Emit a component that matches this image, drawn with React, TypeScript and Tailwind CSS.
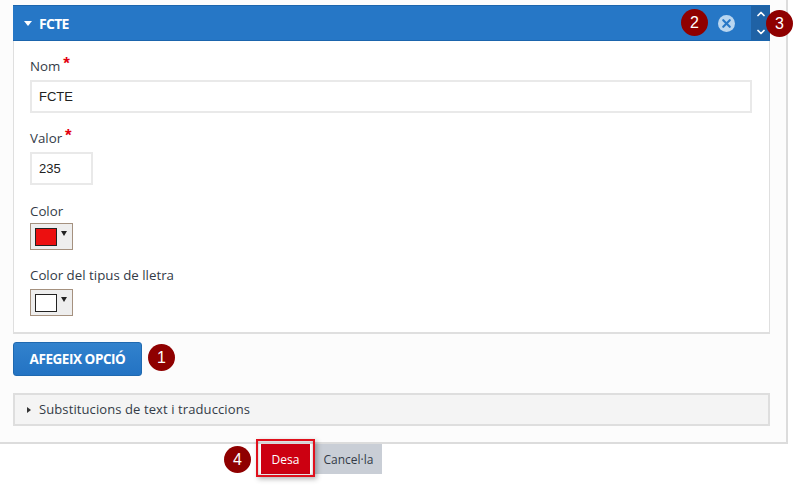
import { ChevronUp, ChevronDown, X } from "lucide-react";

const openSans = "font-['Open_Sans',sans-serif]";

function Badge({ n, className }: { n: number; className: string }) {
  return (
    <span
      className={`absolute flex h-[27px] w-[27px] items-center justify-center rounded-full bg-[#8f0000] font-['Liberation_Sans',sans-serif] text-[16px] text-white ${className}`}
    >
      {n}
    </span>
  );
}

function Required({ label }: { label: string }) {
  return (
    <label className="flex h-[20px] items-center text-[13.3px] text-[#333b47]">
      <span className="mt-[2px]">{label}</span>
      <span className="ml-[3px] -mt-[6px] font-['Liberation_Sans',sans-serif] text-[17px] font-bold leading-none text-[#e3000f]">*</span>
    </label>
  );
}

function ColorPicker({ color }: { color: string }) {
  return (
    <div className="flex h-[27px] w-[43px] items-start border border-[#a5917f] bg-[#eeeeee] pl-[4px] pt-[4px]">
      <div className={`h-[18px] w-[22px] border border-[#222222] ${color}`} />
      <span className="ml-[4px] mt-[3px] h-0 w-0 border-x-[3px] border-t-[5px] border-x-transparent border-t-[#222222]" />
    </div>
  );
}

export default function App() {
  return (
    <div className={`relative h-[489px] w-[800px] overflow-hidden bg-white ${openSans}`}>
      <div className="w-[788px] border-b-2 border-r-2 border-[#dcdcdc] bg-[#fcfcfc] px-[13px] pb-[16px] pt-[5px]">
        {/* option header */}
        <div className="flex h-[36px] w-[757px] items-center border-y border-[#1b65ad] bg-[#2677c6] pl-[11px] text-white">
          <span className="h-0 w-0 border-x-[4px] border-t-[5px] border-x-transparent border-t-white" />
          <span className="ml-[7px] text-[14px] font-bold tracking-[-0.7px]">FCTE</span>
          <span className="ml-auto mr-[16px] flex h-[17px] w-[17px] items-center justify-center rounded-full bg-[#b9d6f0]">
            <X size={13} strokeWidth={4} className="text-[#2677c6]" />
          </span>
          <div className="flex h-full w-[19px] flex-col items-center justify-center gap-[6px] bg-[#1f62a5]">
            <ChevronUp size={12} strokeWidth={3.5} />
            <ChevronDown size={12} strokeWidth={3.5} />
          </div>
        </div>

        {/* option fields */}
        <div className="h-[293px] w-[757px] border-x border-b-2 border-[#dfdfdf] bg-white pl-[16px] pt-[15px]">
          <Required label="Nom" />
          <input
            readOnly
            value="FCTE"
            className="mt-[4px] block h-[33px] w-[722px] border-2 border-[#e9e9e9] bg-white px-[7px] font-['Liberation_Sans',sans-serif] text-[13px] text-[#222222]"
          />
          <div className="mt-[15px]">
            <Required label="Valor" />
          </div>
          <input
            readOnly
            value="235"
            className="mt-[4px] block h-[33px] w-[63px] border-2 border-[#e9e9e9] bg-white px-[7px] pb-[1px] font-['Liberation_Sans',sans-serif] text-[13px] text-[#222222]"
          />
          <label className="mt-[16px] block h-[20px] text-[13.3px] leading-[20px] text-[#333b47]">Color</label>
          <div className="mt-[2px]">
            <ColorPicker color="bg-[#ec1010]" />
          </div>
          <label className="mt-[15px] block h-[20px] text-[13.3px] leading-[20px] text-[#333b47]">Color del tipus de lletra</label>
          <div className="mt-[4px]">
            <ColorPicker color="bg-white" />
          </div>
        </div>

        <button className="mt-[8px] block h-[34px] w-[129px] rounded-[3px] border border-[#1f69b0] bg-gradient-to-b from-[#3282cd] to-[#2373c3] pt-[1px] text-[13.5px] font-bold tracking-[-0.45px] text-white">
          AFEGEIX OPCIÓ
        </button>

        <div className="mt-[17px] flex h-[33px] w-[757px] items-center border-2 border-[#dedede] bg-[#f4f4f4] pl-[12px] text-[13px] tracking-[0.1px] text-[#333b47]">
          <span className="h-0 w-0 border-y-[3px] border-l-[4px] border-y-transparent border-l-[#333333]" />
          <span className="ml-[8px]">Substitucions de text i traduccions</span>
        </div>
      </div>

      {/* form actions */}
      <div className="ml-[261px] flex h-[30px] items-stretch">
        <button className="relative w-[49px] bg-[#cc0011] pt-[1px] text-[12px] text-white">
          Desa
          <span className="absolute -bottom-[3px] -left-[5px] -right-[5px] -top-[5px] border-2 border-[#e0101c] shadow-[2px_2px_5px_rgba(0,0,0,0.3),inset_0_0_3px_rgba(0,0,0,0.3)]" />
        </button>
        <button className="ml-[5px] w-[67px] bg-[#c9ced6] pt-[2px] text-[12px] text-[#333b47]">Cancel·la</button>
      </div>

      <Badge n={1} className="left-[148px] top-[344px]" />
      <Badge n={2} className="left-[681px] top-[9px]" />
      <Badge n={3} className="left-[766px] top-[10px]" />
      <Badge n={4} className="left-[224px] top-[446px]" />
    </div>
  );
}
